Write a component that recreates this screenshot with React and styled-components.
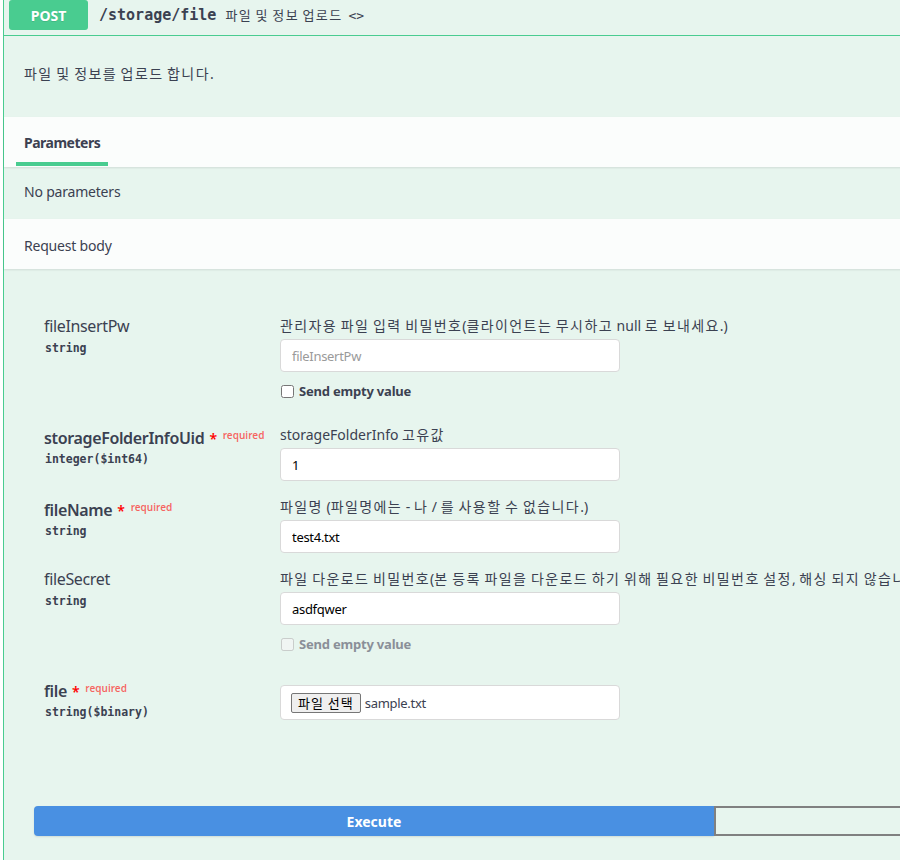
import React from "react";
import styled, { createGlobalStyle } from "styled-components";

const GlobalStyle = createGlobalStyle`
  html, body {
    margin: 0;
    padding: 0;
    background: #fff;
    overflow: hidden;
  }
  #root {
    width: 900px;
    height: 860px;
    overflow: hidden;
  }
`;

const params = [
  {
    name: "fileInsertPw",
    type: "string",
    desc: "관리자용 파일 입력 비밀번호(클라이언트는 무시하고 null 로 보내세요.)",
    placeholder: "fileInsertPw",
    emptyValue: "on",
  },
  {
    name: "storageFolderInfoUid",
    type: "integer($int64)",
    required: true,
    desc: "storageFolderInfo 고유값",
    value: "1",
  },
  {
    name: "fileName",
    type: "string",
    required: true,
    desc: "파일명 (파일명에는 - 나 / 를 사용할 수 없습니다.)",
    value: "test4.txt",
  },
  {
    name: "fileSecret",
    type: "string",
    desc: "파일 다운로드 비밀번호(본 등록 파일을 다운로드 하기 위해 필요한 비밀번호 설정, 해싱 되지 않습니다.)",
    value: "asdfqwer",
    emptyValue: "disabled",
  },
];

// 한글 부분만 자간을 넓혀서 원본(맑은 고딕) 폭에 맞춘다
function Ko({ children }) {
  const parts = String(children).split(/([가-힣]+)/);
  return parts.map((part, i) =>
    /[가-힣]/.test(part) ? <Hangul key={i}>{part}</Hangul> : part
  );
}

function App() {
  return (
    <Page>
      <GlobalStyle />
      <Opblock>
        <Summary>
          <Method>POST</Method>
          <Path>/storage/file</Path>
          <SummaryDesc>
            <Ko>파일 및 정보 업로드</Ko>
          </SummaryDesc>
          <Copy>&lt;&gt;</Copy>
        </Summary>

        <Description>
          <Ko>파일 및 정보를 업로드 합니다.</Ko>
        </Description>

        <SectionHeader>
          <Tab>Parameters</Tab>
        </SectionHeader>
        <PlainSection>No parameters</PlainSection>
        <SectionHeader $padded>Request body</SectionHeader>

        <Body>
          <ParamTable>
            {params.map((p) => (
              <Row key={p.name}>
                <NameCell>
                  <ParamName $required={p.required}>
                    {p.name}
                    {p.required && (
                      <>
                        <Star>*</Star>
                        <Req>required</Req>
                      </>
                    )}
                  </ParamName>
                  <ParamType $required={p.required}>{p.type}</ParamType>
                </NameCell>
                <DescCell>
                  <DescText>
                    <Ko>{p.desc}</Ko>
                  </DescText>
                  <Field
                    placeholder={p.placeholder}
                    defaultValue={p.value}
                    readOnly
                  />
                  {p.emptyValue && (
                    <EmptyValue $disabled={p.emptyValue === "disabled"}>
                      <input
                        type="checkbox"
                        disabled={p.emptyValue === "disabled"}
                      />
                      Send empty value
                    </EmptyValue>
                  )}
                </DescCell>
              </Row>
            ))}
            <Row>
              <NameCell>
                <ParamName $required>
                  file
                  <Star>*</Star>
                  <Req>required</Req>
                </ParamName>
                <ParamType $required>string($binary)</ParamType>
              </NameCell>
              <DescCell>
                <FileBox>
                  <FileButton>파일 선택</FileButton>
                  <FileName>sample.txt</FileName>
                </FileBox>
              </DescCell>
            </Row>
          </ParamTable>

          <BtnGroup>
            <ExecuteBtn>Execute</ExecuteBtn>
            <ClearBtn>Clear</ClearBtn>
          </BtnGroup>
        </Body>
      </Opblock>
    </Page>
  );
}

const Page = styled.div`
  padding-left: 3px;
  font-family: "Noto Sans", "Noto Sans CJK KR", sans-serif;
  color: #3b4151;
`;
const Hangul = styled.span`
  font-family: "Noto Sans CJK KR", sans-serif;
  letter-spacing: 1.4px;
  line-height: 1;
`;
const Opblock = styled.div`
  width: 1420px;
  min-height: 860px;
  background: #e7f5ee;
  border-left: 1px solid #49cc90;
  box-sizing: border-box;
`;
const Summary = styled.div`
  display: flex;
  align-items: center;
  height: 36px;
  box-sizing: border-box;
  padding: 0 5px 5px;
  border-bottom: 1px solid #49cc90;
`;
const Method = styled.div`
  width: 79px;
  height: 30px;
  display: flex;
  align-items: center;
  justify-content: center;
  background: #49cc90;
  color: #fff;
  border-radius: 3px;
  font-size: 14px;
  font-weight: 700;
  text-shadow: 0 1px 0 rgba(0, 0, 0, 0.1);
`;
const Path = styled.span`
  margin-left: 11px;
  font-family: "DejaVu Sans Mono", monospace;
  font-size: 15px;
  font-weight: 600;
  color: #3b4151;
`;
const SummaryDesc = styled.span`
  margin-left: 9px;
  font-size: 13px;
`;
const Copy = styled.span`
  margin-left: 6px;
  font-size: 13px;
  font-family: "DejaVu Sans Mono", monospace;
`;
const Description = styled.div`
  height: 81px;
  box-sizing: border-box;
  padding: 28px 20px 0;
  font-size: 14px;
  line-height: 20px;
  overflow: hidden;
`;
const SectionHeader = styled.div`
  height: 50px;
  box-sizing: border-box;
  display: flex;
  align-items: ${(p) => (p.$padded ? "center" : "stretch")};
  padding: ${(p) => (p.$padded ? "2px 20px 0" : "0 12px")};
  background: rgba(255, 255, 255, 0.82);
  box-shadow: 0 1px 2px rgba(0, 0, 0, 0.1);
  font-size: 14px;
  letter-spacing: -0.2px;
  position: relative;
`;
const Tab = styled.div`
  display: flex;
  align-items: center;
  padding: 0 8px;
  font-weight: 700;
  letter-spacing: -0.5px;
  position: relative;
  &::after {
    content: "";
    position: absolute;
    left: 0;
    right: 0;
    bottom: 1px;
    height: 4px;
    background: #49cc90;
  }
`;
const PlainSection = styled.div`
  height: 52px;
  display: flex;
  align-items: center;
  padding: 0 20px 3px;
  box-sizing: border-box;
  font-size: 14px;
  letter-spacing: -0.2px;
`;
const Body = styled.div`
  padding: 46px 0 0 40px;
`;
const ParamTable = styled.div`
  display: flex;
  flex-direction: column;
`;
const Row = styled.div`
  display: grid;
  grid-template-columns: 236px 1fr;
  padding-bottom: 15px;
`;
const NameCell = styled.div`
  display: flex;
  flex-direction: column;
`;
const ParamName = styled.div`
  font-size: 16px;
  line-height: 22px;
  height: 22px;
  font-weight: ${(p) => (p.$required ? 600 : 400)};
  letter-spacing: -0.35px;
  white-space: nowrap;
`;
const Star = styled.span`
  color: #f00;
  font-size: 14px;
  margin-left: 5px;
`;
const Req = styled.span`
  color: rgba(255, 0, 0, 0.6);
  font-size: 10px;
  font-weight: 600;
  letter-spacing: 0;
  margin-left: 6px;
  vertical-align: 5px;
`;
const ParamType = styled.div`
  margin-top: ${(p) => (p.$required ? "4px" : "2px")};
  font-family: "DejaVu Sans Mono", monospace;
  font-size: 11.5px;
  font-weight: 700;
  line-height: 18px;
  padding-left: 1px;
`;
const DescCell = styled.div`
  display: flex;
  flex-direction: column;
  align-items: flex-start;
  white-space: nowrap;
`;
const DescText = styled.div`
  font-size: 14px;
  line-height: 20px;
  height: 20px;
  padding-top: 1px;
`;
const Field = styled.input`
  margin-top: 3px;
  width: 340px;
  height: 33px;
  box-sizing: border-box;
  border: 1px solid #d9d9d9;
  border-radius: 4px;
  background: #fff;
  padding: 0 11px;
  font-family: "Noto Sans", sans-serif;
  font-size: 13px;
  letter-spacing: -0.3px;
  color: #000;
  outline: none;
  &::placeholder {
    color: #9a9a9a;
  }
`;
const EmptyValue = styled.label`
  display: flex;
  align-items: center;
  gap: 5px;
  margin: 10px 0 9px;
  height: 18px;
  font-size: 13px;
  font-weight: 700;
  letter-spacing: -0.2px;
  color: ${(p) => (p.$disabled ? "#8a8f98" : "#3b4151")};
  input {
    margin: 0 0 0 1px;
    width: 13px;
    height: 13px;
  }
`;
const FileBox = styled.div`
  margin-top: 8px;
  width: 340px;
  height: 35px;
  box-sizing: border-box;
  border: 1px solid #d9d9d9;
  border-radius: 4px;
  background: #fff;
  display: flex;
  align-items: center;
  padding: 0 10px;
  gap: 4px;
`;
const FileButton = styled.span`
  display: inline-flex;
  align-items: center;
  height: 18px;
  padding: 0 6px;
  background: #efefef;
  border: 1px solid #767676;
  border-radius: 2px;
  font-family: "Noto Sans CJK KR", sans-serif;
  font-size: 13px;
  letter-spacing: 1px;
  color: #000;
`;
const FileName = styled.span`
  font-size: 13px;
  letter-spacing: -0.3px;
  color: #3b4151;
`;
const BtnGroup = styled.div`
  display: flex;
  margin: 70px 0 0 -10px;
`;
const ExecuteBtn = styled.div`
  width: 680px;
  height: 30px;
  display: flex;
  align-items: center;
  justify-content: center;
  background: #4990e2;
  color: #fff;
  font-size: 14px;
  font-weight: 700;
  border-radius: 4px 0 0 4px;
  box-shadow: 0 1px 2px rgba(0, 0, 0, 0.1);
`;
const ClearBtn = styled.div`
  width: 680px;
  height: 30px;
  box-sizing: border-box;
  display: flex;
  align-items: center;
  justify-content: center;
  border: 2px solid #808080;
  border-radius: 0 4px 4px 0;
  font-size: 14px;
  font-weight: 700;
`;

export default App;
